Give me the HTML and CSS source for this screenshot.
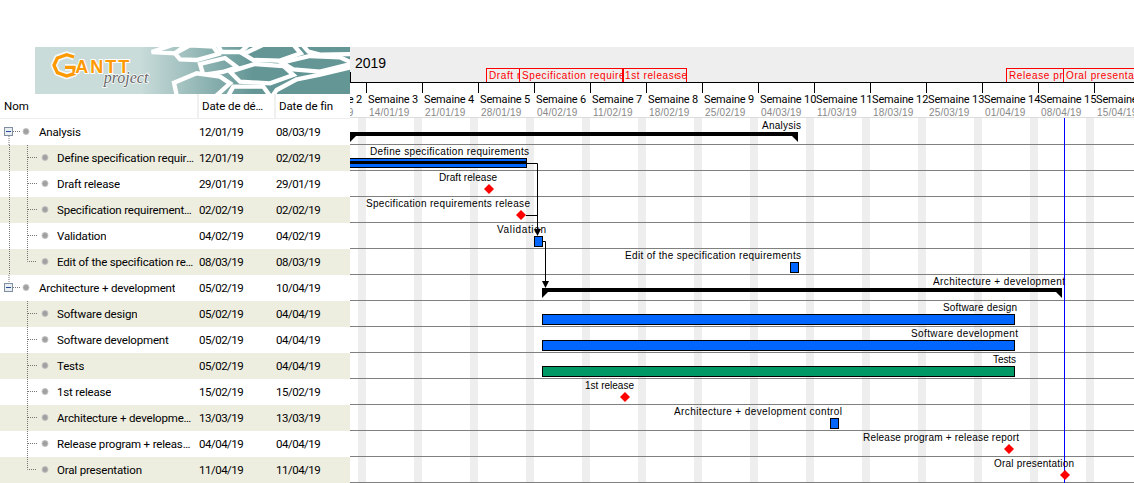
FILE: index.html
```html
<!DOCTYPE html>
<html lang="fr">
<head>
  <meta charset="UTF-8" />
  <title>GanttProject</title>
  <link rel="stylesheet" href="styles.css">
</head>
<body>

<svg class="defs" width="0" height="0">
  <symbol id="t-parent-first" viewBox="0 0 57 26">
    <path class="guide" d="M9 13V26M13 12.500H20" />
    <rect class="box" x="4.500" y="8.500" width="8" height="8" />
    <path class="minus" d="M6 12.500H11" />
    <circle class="dot" cx="26" cy="12.500" r="3" />
  </symbol>
  <symbol id="t-parent-last" viewBox="0 0 57 26">
    <path class="guide" d="M9 0V9M13 12.500H20" />
    <rect class="box" x="4.500" y="8.500" width="8" height="8" />
    <path class="minus" d="M6 12.500H11" />
    <circle class="dot" cx="26" cy="12.500" r="3" />
  </symbol>
  <symbol id="t-child" viewBox="0 0 57 26">
    <path class="guide" d="M9.500 0V26M27.500 0V26M28 12.500H37" />
    <circle class="dot" cx="45" cy="12.500" r="3" />
  </symbol>
  <symbol id="t-child-end" viewBox="0 0 57 26">
    <path class="guide" d="M9.500 0V26M27.500 0V12.500H37" />
    <circle class="dot" cx="45" cy="12.500" r="3" />
  </symbol>
  <symbol id="t-sub" viewBox="0 0 57 26">
    <path class="guide" d="M27.500 0V26M28 12.500H37" />
    <circle class="dot" cx="45" cy="12.500" r="3" />
  </symbol>
  <symbol id="t-sub-end" viewBox="0 0 57 26">
    <path class="guide" d="M27.500 0V12.500H37" />
    <circle class="dot" cx="45" cy="12.500" r="3" />
  </symbol>
</svg>

<div class="app">

  <!-- task table -->
  <div class="tasks">
    <div class="logo">
      <svg width="315" height="47" viewBox="105 21 945 141">
        <defs>
          <linearGradient id="logoBg" gradientUnits="userSpaceOnUse" x1="420" y1="0" x2="760" y2="0">
            <stop offset="0" stop-color="#c9dcda" />
            <stop offset="1" stop-color="#639695" />
          </linearGradient>
        </defs>
        <rect x="105" y="21" width="945" height="141" fill="url(#logoBg)" />
        <g class="hex">
          <polygon fill="url(#logoBg)" points="455,36 520,14 560,14 525,40" />
          <polygon fill="url(#logoBg)" points="525,40 570,16 640,20 655,42 590,60 540,58" />
          <polygon fill="url(#logoBg)" points="650,10 750,10 722,36 665,36" />
          <polygon fill="url(#logoBg)" points="730,42 790,14 880,14 902,40 840,62 760,60" />
          <polygon fill="url(#logoBg)" points="905,12 1060,12 1060,42 960,44 925,35" />
          <polygon fill="url(#logoBg)" points="600,72 675,54 712,82 668,96 610,105" />
          <polygon fill="url(#logoBg)" points="690,95 765,72 850,78 880,105 810,130 720,125" />
          <polygon fill="url(#logoBg)" points="845,68 930,48 1020,52 1060,70 960,95 880,88" />
          <polygon fill="url(#logoBg)" points="890,118 960,104 1060,80 1060,175 812,175 830,150" />
          <polygon fill="url(#logoBg)" points="522,128 590,100 660,110 690,130 640,175 532,175" />
          <polygon fill="url(#logoBg)" points="700,140 790,140 815,175 680,175" />
        </g>
        <polyline class="logo-halo" points="222,51 200,44 172,54 162,76 172,98 200,108 222,101 222,82 195,82" />
        <polyline class="logo-g" points="222,51 200,44 172,54 162,76 172,98 200,108 222,101 222,82 195,82" />
        <text class="logo-name" x="226" y="100">ANTT</text>
        <text class="logo-sub" x="311" y="128">project</text>
      </svg>
    </div>

    <div class="head">
      <div class="head-name">Nom</div>
      <div class="head-date">Date de début</div>
      <div class="head-date">Date de fin</div>
    </div>

    <div class="row">
      <div class="name parent"><svg class="tree"><use href="#t-parent-first" /></svg><span>Analysis</span></div>
      <div class="date">12/01/19</div><div class="date">08/03/19</div>
    </div>
    <div class="row alt">
      <div class="name"><svg class="tree"><use href="#t-child" /></svg><span>Define specification requirements</span></div>
      <div class="date">12/01/19</div><div class="date">02/02/19</div>
    </div>
    <div class="row">
      <div class="name"><svg class="tree"><use href="#t-child" /></svg><span>Draft release</span></div>
      <div class="date">29/01/19</div><div class="date">29/01/19</div>
    </div>
    <div class="row alt">
      <div class="name"><svg class="tree"><use href="#t-child" /></svg><span>Specification requirements release</span></div>
      <div class="date">02/02/19</div><div class="date">02/02/19</div>
    </div>
    <div class="row">
      <div class="name"><svg class="tree"><use href="#t-child" /></svg><span>Validation</span></div>
      <div class="date">04/02/19</div><div class="date">04/02/19</div>
    </div>
    <div class="row alt">
      <div class="name"><svg class="tree"><use href="#t-child-end" /></svg><span>Edit of the specification requirements</span></div>
      <div class="date">08/03/19</div><div class="date">08/03/19</div>
    </div>
    <div class="row">
      <div class="name parent"><svg class="tree"><use href="#t-parent-last" /></svg><span>Architecture + development</span></div>
      <div class="date">05/02/19</div><div class="date">10/04/19</div>
    </div>
    <div class="row alt">
      <div class="name"><svg class="tree"><use href="#t-sub" /></svg><span>Software design</span></div>
      <div class="date">05/02/19</div><div class="date">04/04/19</div>
    </div>
    <div class="row">
      <div class="name"><svg class="tree"><use href="#t-sub" /></svg><span>Software development</span></div>
      <div class="date">05/02/19</div><div class="date">04/04/19</div>
    </div>
    <div class="row alt">
      <div class="name"><svg class="tree"><use href="#t-sub" /></svg><span>Tests</span></div>
      <div class="date">05/02/19</div><div class="date">04/04/19</div>
    </div>
    <div class="row">
      <div class="name"><svg class="tree"><use href="#t-sub" /></svg><span>1st release</span></div>
      <div class="date">15/02/19</div><div class="date">15/02/19</div>
    </div>
    <div class="row alt">
      <div class="name"><svg class="tree"><use href="#t-sub" /></svg><span>Architecture + development control</span></div>
      <div class="date">13/03/19</div><div class="date">13/03/19</div>
    </div>
    <div class="row">
      <div class="name"><svg class="tree"><use href="#t-sub" /></svg><span>Release program + release report</span></div>
      <div class="date">04/04/19</div><div class="date">04/04/19</div>
    </div>
    <div class="row alt">
      <div class="name"><svg class="tree"><use href="#t-sub-end" /></svg><span>Oral presentation</span></div>
      <div class="date">11/04/19</div><div class="date">11/04/19</div>
    </div>
  </div>

  <!-- chart: a free canvas, drawn in page coordinates -->
  <svg class="chart" width="784" height="436" viewBox="350 47 784 436">
    <defs>
      <pattern id="weekend" patternUnits="userSpaceOnUse" x="358" y="0" width="56" height="10">
        <rect width="8" height="10" fill="#eeeeee" />
      </pattern>
      <pattern id="rowline" patternUnits="userSpaceOnUse" x="0" y="144" width="10" height="26">
        <rect width="10" height="1" fill="#808080" />
      </pattern>
    </defs>

    <rect class="band" x="350" y="47" width="784" height="35" />
    <rect x="350" y="118" width="784" height="365" fill="url(#weekend)" />
    <rect x="350" y="144" width="784" height="339" fill="url(#rowline)" />
    <rect class="head-line" x="350" y="117" width="784" height="1" />

    <text class="year" x="355" y="68">2019</text>

    <!-- milestones in the header -->
    <svg x="486" y="68" width="34" height="15"><rect class="flag" x="0.500" y="0.500" width="40" height="14" /><text class="flag-text" x="3" y="11">Draft release</text></svg>
    <svg x="519" y="68" width="105" height="15"><rect class="flag" x="0.500" y="0.500" width="104" height="14" /><text class="flag-text" x="3" y="11">Specification requirements release</text></svg>
    <svg x="622" y="68" width="54" height="15"><rect class="flag" x="0.500" y="0.500" width="60" height="14" /><text class="flag-text" x="3" y="11">1st release</text></svg>
    <svg x="675" y="68" width="12" height="15"><rect class="flag" x="-5" y="0.500" width="16.500" height="14" /><text class="flag-text" x="1" y="11">se</text></svg>
    <svg x="1006" y="68" width="58" height="15"><rect class="flag" x="0.500" y="0.500" width="70" height="14" /><text class="flag-text" x="3" y="11">Release program + release report</text></svg>
    <svg x="1063" y="68" width="71" height="15"><rect class="flag" x="0.500" y="0.500" width="100" height="14" /><text class="flag-text" x="3" y="11">Oral presentation</text></svg>

    <path class="rule" d="M350 82.500H1134M350.500 72V82M366.500 82V93M422.500 82V93M478.500 82V93M534.500 82V93M590.500 82V93M646.500 82V93M702.500 82V93M758.500 82V93M814.500 82V93M870.500 82V93M926.500 82V93M982.500 82V93M1038.500 82V93M1094.500 82V93" />

    <text class="week" x="312" y="103">Semaine 2</text>
    <text class="week" x="368" y="103">Semaine 3</text>
    <text class="week" x="424" y="103">Semaine 4</text>
    <text class="week" x="480" y="103">Semaine 5</text>
    <text class="week" x="536" y="103">Semaine 6</text>
    <text class="week" x="592" y="103">Semaine 7</text>
    <text class="week" x="648" y="103">Semaine 8</text>
    <text class="week" x="704" y="103">Semaine 9</text>
    <text class="week" x="760" y="103">Semaine 10</text>
    <text class="week" x="816" y="103">Semaine 11</text>
    <text class="week" x="872" y="103">Semaine 12</text>
    <text class="week" x="928" y="103">Semaine 13</text>
    <text class="week" x="984" y="103">Semaine 14</text>
    <text class="week" x="1040" y="103">Semaine 15</text>
    <text class="week" x="1096" y="103">Semaine 16</text>

    <text class="day" x="313" y="116">07/01/19</text>
    <text class="day" x="369" y="116">14/01/19</text>
    <text class="day" x="425" y="116">21/01/19</text>
    <text class="day" x="481" y="116">28/01/19</text>
    <text class="day" x="537" y="116">04/02/19</text>
    <text class="day" x="593" y="116">11/02/19</text>
    <text class="day" x="649" y="116">18/02/19</text>
    <text class="day" x="705" y="116">25/02/19</text>
    <text class="day" x="761" y="116">04/03/19</text>
    <text class="day" x="817" y="116">11/03/19</text>
    <text class="day" x="873" y="116">18/03/19</text>
    <text class="day" x="929" y="116">25/03/19</text>
    <text class="day" x="985" y="116">01/04/19</text>
    <text class="day" x="1041" y="116">08/04/19</text>
    <text class="day" x="1097" y="116">15/04/19</text>

    <!-- today -->
    <rect class="today" x="1064" y="118" width="1" height="365" />

    <!-- dependencies -->
    <path class="dep" d="M527 163.500H537.500V230M526 215.500H537.500M543 241.500H545.500V283" />
    <polygon class="summary" points="534,229 541,229 537.500,236" />
    <polygon class="summary" points="542,281 549,281 545.500,288" />

    <!-- summary tasks -->
    <rect class="summary" x="350" y="132" width="448" height="4" />
    <polygon class="summary" points="350,136 356,136 350,142" />
    <polygon class="summary" points="792,136 798,136 798,142" />
    <rect class="summary" x="542" y="288" width="520" height="4" />
    <polygon class="summary" points="542,292 548,292 542,298" />
    <polygon class="summary" points="1056,292 1062,292 1062,298" />

    <!-- tasks -->
    <rect class="bar" x="340.500" y="158.500" width="186" height="9" />
    <rect class="summary" x="350" y="161" width="177" height="3" />
    <rect class="bar" x="534.500" y="236.500" width="8" height="10" />
    <rect class="bar" x="790.500" y="262.500" width="8" height="10" />
    <rect class="bar" x="542.500" y="314.500" width="472" height="10" />
    <rect class="bar" x="542.500" y="340.500" width="472" height="10" />
    <rect class="bar green" x="542.500" y="366.500" width="472" height="10" />
    <rect class="bar" x="830.500" y="418.500" width="8" height="10" />

    <!-- milestones -->
    <polygon class="mile" points="489,184 494,189 489,194 484,189" />
    <polygon class="mile" points="521,210 526,215 521,220 516,215" />
    <polygon class="mile" points="625,392 630,397 625,402 620,397" />
    <polygon class="mile" points="1009,444 1014,449 1009,454 1004,449" />
    <polygon class="mile" points="1065,470 1070,475 1065,480 1060,475" />

    <!-- labels -->
    <text class="lbl" x="762" y="129" textLength="39">Analysis</text>
    <text class="lbl" x="370" y="155" textLength="159">Define specification requirements</text>
    <text class="lbl" x="439" y="181" textLength="58">Draft release</text>
    <text class="lbl" x="366" y="207" textLength="164">Specification requirements release</text>
    <text class="lbl" x="497" y="233" textLength="49">Validation</text>
    <text class="lbl" x="625" y="259" textLength="176">Edit of the specification requirements</text>
    <text class="lbl" x="933" y="285" textLength="132">Architecture + development</text>
    <text class="lbl" x="943" y="311" textLength="74">Software design</text>
    <text class="lbl" x="911" y="337" textLength="107">Software development</text>
    <text class="lbl" x="993" y="363" textLength="23">Tests</text>
    <text class="lbl" x="585" y="389" textLength="49">1st release</text>
    <text class="lbl" x="674" y="415" textLength="168">Architecture + development control</text>
    <text class="lbl" x="863" y="441" textLength="156">Release program + release report</text>
    <text class="lbl" x="994" y="467" textLength="80">Oral presentation</text>
  </svg>

</div>

</body>
</html>
```

FILE: styles.css
```css
html, body {
  margin: 0;
  padding: 0;
  background: #fff;
}

body {
  font-family: Roboto, "Liberation Sans", sans-serif;
  font-size: 11.5px;
  color: #000;
  height: 483px;
  overflow: hidden;
}

.defs { display: block; height: 0; }

.app { display: flex; align-items: flex-start; }

/* left table */
.tasks {
  width: 350px;
  flex: none;
  padding-top: 47px;
}

.logo {
  height: 47px;
  padding-left: 35px;
}
.logo svg { display: block; }

.hex { stroke: #fff; stroke-width: 13; stroke-linejoin: miter; }
.logo-halo { fill: none; stroke: #fff; stroke-width: 20; stroke-linejoin: round; opacity: 0.8; }
.logo-g { fill: none; stroke: #ff9900; stroke-width: 10; stroke-linejoin: miter; }
.logo-name {
  font-family: "Liberation Sans", sans-serif;
  font-weight: bold;
  font-size: 54px;
  letter-spacing: 6px;
  fill: #ff9900;
  stroke: #fff;
  stroke-width: 6px;
  paint-order: stroke;
}
.logo-sub {
  font-family: "Liberation Serif", serif;
  font-style: italic;
  font-size: 48px;
  fill: #666;
  stroke: #fff;
  stroke-width: 4px;
  paint-order: stroke;
}

.head {
  display: grid;
  grid-template-columns: 197px 77px 76px;
  height: 24px;
  line-height: 24px;
  border-bottom: 1px solid #eeeeee;
}
.head-name { padding-left: 4px; }
.head-date {
  padding-left: 3px;
  padding-right: 6px;
  border-left: 2px solid #f0f0f0;
  box-sizing: border-box;
  letter-spacing: -0.1px;
  white-space: nowrap;
  overflow: hidden;
  text-overflow: ellipsis;
}

.row {
  display: grid;
  grid-template-columns: 197px 77px 76px;
  height: 26px;
  line-height: 26px;
}
.row.alt { background: #eeeee0; }

.name {
  display: flex;
  min-width: 0;
  padding-right: 2px;
  letter-spacing: -0.17px;
}
.name span {
  white-space: nowrap;
  overflow: hidden;
  text-overflow: ellipsis;
}
.name.parent span { margin-left: -18px; }

.tree { width: 57px; height: 26px; flex: none; }
.guide { fill: none; stroke: #777; stroke-width: 1; stroke-dasharray: 1 1; }
.box { fill: #e8eef2; stroke: #7f8f9f; }
.minus { stroke: #2a4a9a; }
.dot { fill: #a0a0a0; stroke: #c4c4c4; }

.date { padding-left: 2px; letter-spacing: -0.5px; }

/* chart */
.chart { display: block; flex: none; margin-top: 47px; }

.band { fill: #eeeeee; }
.head-line { fill: #dddddd; }
.rule { fill: none; stroke: #000; stroke-width: 1; }
.today { fill: #0000ff; }
.dep { fill: none; stroke: #000; stroke-width: 1; }
.summary { fill: #000; }
.bar { fill: #0066ff; stroke: #000; stroke-width: 1; }
.bar.green { fill: #009966; }
.mile { fill: #ff0000; }

.year { font-family: "Liberation Sans", sans-serif; font-size: 14px; fill: #000; }
.week { font-family: Roboto, "Liberation Sans", sans-serif; font-size: 11px; letter-spacing: -0.15px; fill: #000; }
.day { font-family: "Liberation Sans", sans-serif; font-size: 10px; letter-spacing: 0.2px; fill: #888; }
.lbl { font-family: "Liberation Sans", sans-serif; font-size: 10px; fill: #000; }
.flag { fill: none; stroke: #ff0000; stroke-width: 1; }
.flag-text { font-family: "Liberation Sans", sans-serif; font-size: 10px; letter-spacing: 0.6px; fill: #ff0000; }
```
